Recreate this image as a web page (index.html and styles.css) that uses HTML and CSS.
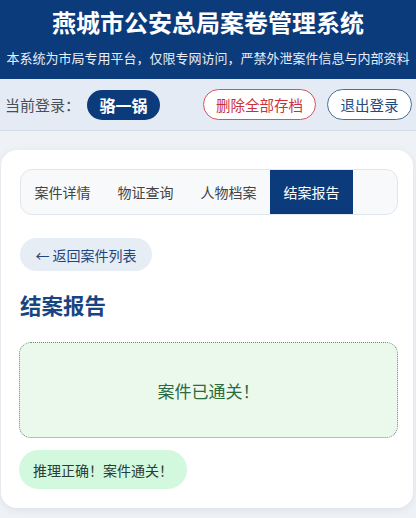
FILE: index.html
```html
<!DOCTYPE html>
<html lang="zh-CN">
<head>
<meta charset="utf-8">
<title>燕城市公安总局案卷管理系统</title>
<link rel="stylesheet" href="styles.css">
</head>
<body>
  <header class="site-header">
    <h1 class="site-title">燕城市公安总局案卷管理系统</h1>
    <p class="site-notice">本系统为市局专用平台，仅限专网访问，严禁外泄案件信息与内部资料</p>
  </header>

  <div class="user-bar">
    <span class="user-label">当前登录：</span>
    <span class="user-name">骆一锅</span>
    <div class="user-actions">
      <button class="btn btn-danger" type="button">删除全部存档</button>
      <button class="btn btn-outline" type="button">退出登录</button>
    </div>
  </div>

  <main class="panel">
    <nav class="tabs">
      <a class="tab">案件详情</a>
      <a class="tab">物证查询</a>
      <a class="tab">人物档案</a>
      <a class="tab tab-active">结案报告</a>
    </nav>

    <button class="back-btn" type="button">← 返回案件列表</button>

    <h2 class="section-title">结案报告</h2>

    <div class="report-box">案件已通关！</div>

    <div class="result-msg">推理正确！案件通关！</div>
  </main>
</body>
</html>
```

FILE: styles.css
```css
* {
  box-sizing: border-box;
}

html, body {
  margin: 0;
  padding: 0;
}

body {
  background: #eef1f5;
  font-family: "Noto Sans CJK SC", "Noto Sans", sans-serif;
  color: #333;
  min-height: 518px;
}

/* top banner */
.site-header {
  background: #0b3b7b;
  color: #fff;
  text-align: center;
  height: 79px;
  padding-top: 8px;
}

.site-title {
  margin: 0;
  font-size: 24px;
  line-height: 28px;
  font-weight: 700;
  letter-spacing: 0;
}

.site-notice {
  margin: 12px 0 0;
  font-size: 13px;
  line-height: 20px;
  color: #e8eef7;
  white-space: nowrap;
}

/* logged-in user strip */
.user-bar {
  display: flex;
  align-items: center;
  height: 52px;
  padding: 0 4px 0 5px;
  background: #e4ebf4;
  border-bottom: 1px solid #d6dee9;
}

.user-label {
  font-size: 15px;
  color: #4a4f57;
}

.user-name {
  margin-left: 7px;
  width: 73px;
  height: 30px;
  border-radius: 15px;
  background: #0b3b7b;
  color: #fff;
  font-size: 16px;
  font-weight: 700;
  display: flex;
  align-items: center;
  justify-content: center;
}

.user-actions {
  margin-left: auto;
  display: flex;
  gap: 11px;
}

.btn {
  height: 31px;
  border-radius: 16px;
  background: #fff;
  font-family: inherit;
  font-size: 14.5px;
  padding: 0;
  display: flex;
  align-items: center;
  justify-content: center;
  cursor: pointer;
}

.btn-danger {
  width: 113px;
  border: 1.5px solid #d9525c;
  color: #c9303c;
}

.btn-outline {
  width: 85px;
  border: 1.5px solid #48709f;
  color: #1f4a80;
}

/* main content card */
.panel {
  margin: 19px 3px 0 1px;
  background: #fff;
  border-radius: 16px;
  box-shadow: 0 2px 8px rgba(20, 40, 70, 0.07);
  padding: 19px 15px 19px 18px;
  height: 358px;
}

.tabs {
  display: flex;
  height: 46px;
  border: 1px solid #e0e6ee;
  border-radius: 12px;
  background: #f7f9fb;
  overflow: hidden;
  margin-left: 1px;
}

.tab {
  width: 83px;
  display: flex;
  align-items: center;
  justify-content: center;
  font-size: 14px;
  color: #444;
}

.tab-active {
  background: #0b3b7b;
  color: #fff;
}

.back-btn {
  margin-top: 23px;
  margin-left: 1px;
  height: 33px;
  width: 132px;
  border: none;
  border-radius: 17px;
  background: #e6edf5;
  color: #1d477d;
  font-family: inherit;
  font-size: 14px;
  padding: 0;
  display: flex;
  align-items: center;
  justify-content: center;
}

.section-title {
  margin: 18px 0 0 1px;
  font-size: 21.5px;
  line-height: 32px;
  font-weight: 700;
  color: #18457f;
}

.report-box {
  margin-top: 21px;
  height: 96px;
  border: 1.5px dotted #5a9a6a;
  border-radius: 12px;
  background: #ebf9ed;
  color: #2b6a3c;
  font-size: 17px;
  display: flex;
  align-items: center;
  justify-content: center;
}

.result-msg {
  margin-top: 12px;
  display: inline-flex;
  align-items: center;
  height: 39px;
  padding: 0 14px;
  border-radius: 20px;
  background: #d2f8dd;
  color: #2e3a34;
  font-size: 14px;
}
```
